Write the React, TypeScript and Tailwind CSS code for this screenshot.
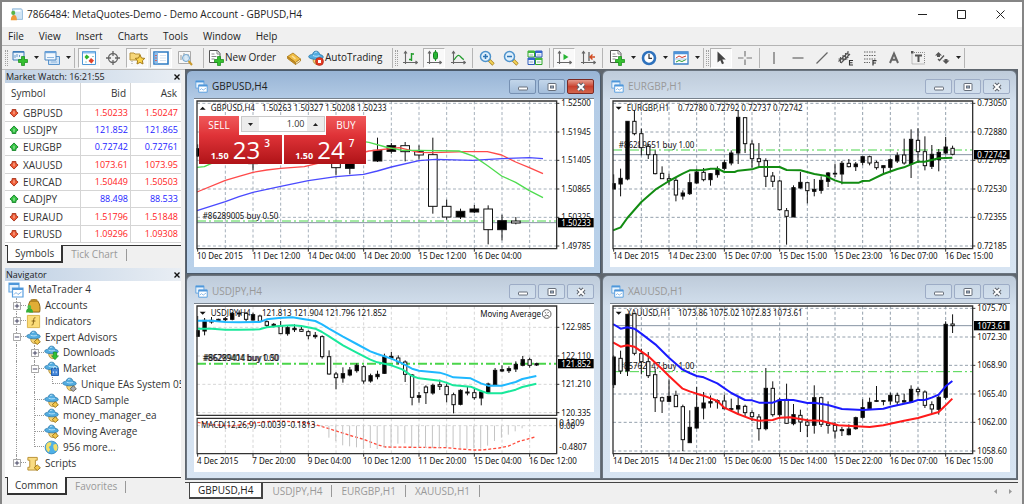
import type { ReactNode } from "react";

/* ---------- data ---------- */

const menus = ["File", "View", "Insert", "Charts", "Tools", "Window", "Help"];

const quotes = [
  { symbol: "GBPUSD", bid: "1.50233", ask: "1.50247", up: false, blue: false },
  { symbol: "USDJPY", bid: "121.852", ask: "121.865", up: true, blue: true },
  { symbol: "EURGBP", bid: "0.72742", ask: "0.72761", up: true, blue: true },
  { symbol: "XAUUSD", bid: "1073.61", ask: "1073.95", up: false, blue: false },
  { symbol: "EURCAD", bid: "1.50449", ask: "1.50503", up: false, blue: false },
  { symbol: "CADJPY", bid: "88.498", ask: "88.533", up: true, blue: true },
  { symbol: "EURAUD", bid: "1.51796", ask: "1.51848", up: false, blue: false },
  { symbol: "EURUSD", bid: "1.09296", ask: "1.09308", up: false, blue: false },
];

/* slot, body top, body bottom, wick top, wick bottom, filled */
type Candle = [number, number, number, number, number, 0 | 1];

const eurgbp: Candle[] = [
  [0, 340, 356, 312, 356, 1], [1, 324, 341, 295, 378, 1], [2, 153, 326, 153, 330, 1], [3, 153, 190, 120, 195, 0],
  [4, 190, 232, 175, 255, 0], [5, 228, 253, 220, 266, 0], [6, 253, 310, 240, 312, 0], [7, 309, 325, 288, 325, 0],
  [8, 325, 330, 310, 345, 0], [9, 330, 374, 322, 393, 0], [10, 368, 377, 360, 388, 1], [11, 337, 370, 310, 374, 1],
  [12, 305, 338, 295, 340, 1], [13, 306, 328, 293, 333, 0], [14, 310, 328, 308, 346, 1], [15, 296, 313, 288, 322, 1],
  [16, 277, 294, 268, 300, 1], [17, 248, 278, 240, 285, 1], [18, 141, 248, 120, 281, 1], [19, 142, 220, 142, 248, 0],
  [20, 221, 265, 210, 292, 0], [21, 265, 274, 218, 290, 0], [22, 271, 318, 264, 350, 0], [23, 317, 333, 305, 350, 0],
  [24, 332, 418, 328, 420, 0], [25, 421, 438, 413, 523, 0], [26, 352, 440, 345, 440, 1], [27, 336, 353, 305, 355, 1],
  [28, 337, 361, 337, 399, 0], [29, 357, 363, 326, 378, 1], [30, 330, 360, 318, 370, 1], [31, 308, 333, 305, 350, 1],
  [32, 309, 311, 280, 320, 1], [33, 279, 311, 272, 342, 1], [34, 279, 289, 266, 291, 0], [35, 281, 289, 275, 302, 1],
  [36, 259, 276, 259, 285, 1], [37, 259, 278, 256, 285, 0], [38, 276, 292, 271, 298, 0], [39, 286, 292, 286, 308, 1],
  [40, 268, 291, 264, 304, 1], [41, 256, 272, 246, 278, 1], [42, 254, 278, 205, 283, 0], [43, 207, 281, 177, 323, 1],
  [44, 210, 244, 174, 278, 0], [45, 244, 286, 198, 300, 0], [46, 252, 288, 224, 296, 1], [47, 246, 268, 236, 303, 1],
  [48, 230, 248, 200, 252, 1], [49, 234, 252, 226, 255, 0],
];

const xauusd: Candle[] = [
  [0, 245, 328, 240, 338, 1], [1, 249, 287, 226, 296, 0], [2, 117, 287, 117, 302, 1], [3, 115, 234, 115, 240, 0],
  [4, 235, 259, 220, 297, 0], [5, 259, 301, 230, 308, 0], [6, 298, 367, 280, 410, 0], [7, 367, 377, 364, 413, 0],
  [8, 363, 378, 312, 380, 1], [9, 360, 394, 346, 394, 0], [10, 394, 493, 388, 527, 0], [11, 456, 502, 405, 502, 1],
  [12, 396, 458, 335, 460, 1], [13, 383, 398, 350, 432, 1], [14, 379, 383, 360, 397, 1], [15, 376, 380, 372, 400, 1],
  [16, 377, 400, 358, 402, 0], [17, 400, 402, 370, 405, 1], [18, 391, 401, 362, 418, 1], [19, 393, 412, 388, 425, 0],
  [20, 412, 424, 405, 437, 0], [21, 425, 460, 416, 496, 0], [22, 339, 460, 278, 465, 1], [23, 339, 418, 318, 424, 0],
  [24, 374, 418, 368, 430, 1], [25, 372, 444, 325, 445, 0], [26, 418, 445, 386, 450, 1], [27, 420, 440, 403, 470, 0],
  [28, 440, 450, 430, 485, 0], [29, 367, 450, 330, 475, 1], [30, 367, 447, 364, 455, 0], [31, 445, 450, 378, 475, 0],
  [32, 450, 467, 440, 490, 0], [33, 463, 466, 455, 482, 1], [34, 461, 478, 447, 480, 1], [35, 427, 460, 424, 463, 1],
  [36, 397, 426, 372, 430, 1], [37, 381, 400, 367, 403, 1], [38, 376, 378, 332, 380, 1], [39, 376, 378, 374, 390, 1],
  [40, 360, 377, 352, 388, 1], [41, 360, 380, 352, 392, 0], [42, 376, 380, 355, 382, 1], [43, 342, 381, 330, 383, 1],
  [44, 342, 349, 336, 364, 0], [45, 350, 390, 345, 398, 0], [46, 388, 401, 378, 415, 0], [47, 366, 402, 360, 418, 1],
  [48, 147, 366, 138, 372, 1], [49, 146, 151, 117, 173, 0],
];

const usdjpy: Candle[] = [
  [0, 166, 183, 122, 183, 1], [1, 135, 167, 128, 180, 1], [2, 135, 140, 125, 145, 0], [3, 132, 138, 130, 140, 1],
  [4, 130, 133, 125, 138, 1], [5, 114, 132, 110, 135, 1], [6, 113, 116, 105, 125, 1], [7, 114, 132, 110, 138, 0],
  [8, 118, 134, 112, 136, 1], [9, 122, 138, 118, 140, 0], [10, 139, 150, 135, 155, 0], [11, 147, 153, 143, 156, 1],
  [12, 151, 175, 137, 176, 0], [13, 157, 175, 150, 181, 1], [14, 159, 163, 147, 170, 1], [15, 162, 168, 150, 170, 0],
  [16, 169, 181, 165, 192, 0], [17, 180, 184, 170, 190, 1], [18, 184, 244, 180, 250, 0], [19, 244, 296, 225, 298, 0],
  [20, 296, 307, 290, 342, 0], [21, 295, 308, 276, 322, 1], [22, 284, 299, 275, 303, 1], [23, 270, 286, 264, 292, 1],
  [24, 274, 317, 270, 325, 0], [25, 301, 317, 295, 322, 1], [26, 297, 304, 286, 312, 1], [27, 243, 294, 235, 296, 1],
  [28, 243, 248, 230, 252, 1], [29, 248, 260, 240, 268, 0], [30, 260, 297, 255, 320, 0], [31, 299, 366, 296, 390, 0],
  [32, 361, 366, 350, 382, 1], [33, 335, 352, 330, 386, 0], [34, 330, 353, 325, 358, 1], [35, 328, 333, 313, 344, 0],
  [36, 333, 358, 325, 381, 0], [37, 358, 388, 352, 414, 0], [38, 345, 387, 342, 390, 1], [39, 350, 353, 332, 360, 1],
  [40, 352, 367, 340, 373, 0], [41, 350, 368, 345, 390, 1], [42, 326, 353, 322, 356, 1], [43, 285, 328, 278, 330, 1],
  [44, 283, 287, 270, 290, 1], [45, 280, 286, 273, 293, 1], [46, 267, 281, 258, 290, 1], [47, 253, 270, 242, 273, 1],
  [48, 253, 270, 247, 277, 0], [49, 265, 269, 262, 272, 1],
];

const gbpusd: Candle[] = [
  [0, 235, 257, 222, 260, 1], [4, 275, 280, 260, 300, 1], [10, 275, 292, 275, 315, 0], [11, 275, 294, 270, 312, 1],
  [13, 240, 272, 202, 275, 1], [14, 226, 243, 218, 250, 1], [15, 226, 244, 215, 273, 0], [16, 244, 254, 225, 268, 0],
  [17, 253, 408, 202, 430, 0], [18, 408, 440, 388, 448, 0], [19, 423, 440, 415, 446, 1], [20, 416, 425, 404, 428, 1],
  [21, 416, 478, 405, 522, 0], [22, 451, 478, 433, 510, 1], [23, 452, 458, 440, 462, 0],
];

const macdBars = [
  455, 487, 497, 510, 513, 516, 521, 518, 521, 517, 514, 505, 504, 517, 516, 518, 518, 517, 516, 517, 519, 520, 519, 520,
  511, 497, 487, 478, 468, 459,
];

/* ---------- chart drawing ---------- */

type ChartProps = {
  name: string;
  x: number;
  header: string;
  values: string;
  open?: boolean;
  candles: Candle[];
  pitch: number;
  lines: { points: string; color: string; width: number; dash?: string }[];
  gridY: number[];
  gridColor: string;
  prices: string[];
  times: string[];
  last: { y: number; text: string };
  order: { y: number; text: string; textX: number; textY: number; width: number };
  priceLine?: boolean;
  bottom: number;
  bodyWidth: number;
  extra?: ReactNode;
};

function Chart(p: ChartProps) {
  const left = p.x + 9;
  const right = left + 1079;
  const first = left + 2;
  const columns = Array.from({ length: 12 }, (_, i) => first + 83 * (i + 1));
  return (
    <svg
      viewBox={`${p.x} 86 1200 504`}
      className="block h-auto w-full bg-white font-['Noto_Sans',sans-serif] text-[24px]"
      role="img"
      aria-label={p.name}
    >
      <g stroke={p.gridColor} strokeWidth="3" strokeDasharray="9 7" fill="none">
        {columns.map((x) => (
          <path key={x} d={`M${x} 93V533`} />
        ))}
        {p.gridY.map((y) => (
          <path key={y} d={`M${left} ${y}H${right}`} />
        ))}
      </g>
      {p.priceLine !== false && <path d={`M${left} ${p.last.y}H${right}`} stroke="#8794a3" strokeWidth="3" />}
      <path
        d={`M${left} ${p.order.y}H${right}`}
        stroke="#4ad54a"
        strokeWidth={p.order.width}
        strokeDasharray="27 9 6 9"
      />
      <path
        d={p.open ? `M${left + 8} 118h18l-9-9z` : `M${left + 8} 109h18l-9 9z`}
        fill="#111"
      />
      <text x={left + 41} y="121" fill="#111">{p.header}</text>
      <text x={left + 195} y="121" fill="#111">{p.values}</text>
      <text x={p.order.textX} y={p.order.textY} fill="#111">{p.order.text}</text>
      {p.candles.map(([slot, top, base, high, low, filled]) => {
        const cx = first + slot * p.pitch;
        return (
          <g key={slot} stroke="#111" strokeWidth="3">
            <path d={`M${cx} ${high}V${low}`} />
            <rect
              x={cx - p.bodyWidth / 2}
              y={top}
              width={p.bodyWidth}
              height={base - top}
              fill={filled ? "#000" : "#fff"}
            />
          </g>
        );
      })}
      {p.lines.map((l) => (
        <polyline
          key={l.color}
          points={l.points}
          fill="none"
          stroke={l.color}
          strokeWidth={l.width}
          strokeDasharray={l.dash}
          strokeLinejoin="round"
        />
      ))}
      {p.extra}
      <path d={`M${p.x} 86H${left - 2}V590H${p.x}z`} fill="#fff" />
      <path d={`M${left} 92H${right}V${p.bottom}H${left}z`} fill="none" stroke="#333" strokeWidth="4" />
      {p.prices.map((t, i) => (
        <g key={t}>
          <path d={`M${right} ${p.gridY[i]}h8`} stroke="#333" strokeWidth="3" />
          <text x={right + 14} y={p.gridY[i] + 9} fill="#111">{t}</text>
        </g>
      ))}
      <rect x={right + 4} y={p.last.y - 14} width="107" height="28" fill="#000" />
      <text x={right + 14} y={p.last.y + 9} fill="#fff">{p.last.text}</text>
      {p.times.map((t, i) => (
        <g key={t}>
          <path d={`M${first + 166 * i} 535v9`} stroke="#333" strokeWidth="3" />
          <text x={first + 166 * i - 2} y="567" fill="#111">{t}</text>
        </g>
      ))}
    </svg>
  );
}

/* ---------- icons ---------- */

function Icon({ children, className = "size-4" }: { children: ReactNode; className?: string }) {
  return (
    <svg viewBox="0 0 16 16" className={`${className} shrink-0`} fill="none" aria-hidden="true">
      {children}
    </svg>
  );
}

const Plus = () => (
  <path d="M9.5 6.5h3v3h3v3h-3v3h-3v-3h-3v-3h3z" fill="#35c02f" stroke="#138a14" strokeWidth=".7" />
);

const NewChartIcon = () => (
  <Icon>
    <path d="M1 1.5h11v8.500H1z" fill="#eaf3fc" stroke="#3f7cb8" />
    <path d="M1 2h11" stroke="#3f7cb8" strokeWidth="1.500" />
    <path d="M3 8V5m2 2V4m2.500 3V5" stroke="#6a9ccc" />
    <Plus />
  </Icon>
);

const ProfilesIcon = () => (
  <Icon>
    <path d="M4.500 6.500h11v8h-11z" fill="#cfe2f5" stroke="#5a94cc" />
    <path d="M1 1.500h11v8.500H1z" fill="#f2f8fe" stroke="#4a86c2" />
    <path d="M1 2.200h11" stroke="#6ba3da" strokeWidth="2" />
    <path d="M3 7.500h7M7 12h6" stroke="#8fb7de" />
  </Icon>
);

const MarketWatchIcon = () => (
  <Icon>
    <path d="M1.500 1.500h13v13h-13z" fill="#fff" stroke="#4d97d6" />
    <path d="M2 2.500h12" stroke="#86bdec" strokeWidth="2" />
    <path d="M5.500 4.500l3 2.500-3 2.500-2-2.500z" fill="#2fb52b" />
    <path d="M10 8l3 2.500-2.500 3-3-2.500z" fill="#e0442a" />
    <path d="M11 6.500h2M4 12h2" stroke="#9cc" />
  </Icon>
);

const TargetIcon = () => (
  <Icon>
    <circle cx="8" cy="8" r="4.500" stroke="#666" strokeWidth="1.300" />
    <path d="M8 1v5M8 10v5M1 8h5M10 8h5" stroke="#666" strokeWidth="1.300" />
  </Icon>
);

const NavigatorIcon = () => (
  <Icon>
    <path d="M1 3h4l1 1h5v6H1z" fill="#f6d679" stroke="#b8933a" />
    <path d="M3 11v3" stroke="#999" strokeDasharray="1 1" />
    <path d="M11 5l1.500 3 3.300.4-2.400 2.300.6 3.300-3-1.600-3 1.600.6-3.300-2.400-2.300 3.300-.4z" fill="#fbd44a" stroke="#a67c1d" />
  </Icon>
);

const TerminalIcon = () => (
  <Icon>
    <path d="M1 2h14v12H1z" fill="#fff" stroke="#2f7cc4" strokeWidth="1.600" />
    <path d="M1.500 2.500h3.500v11H1.500z" fill="#8dbdea" />
    <path d="M3 5v1m0 1.500v1M3 10v1" stroke="#e4452f" strokeWidth="1.400" />
    <path d="M7 5.500h6M7 8h6M7 10.500h6" stroke="#d7e4f2" />
  </Icon>
);

const TesterIcon = () => (
  <Icon>
    <path d="M1.500 1.500h12v12h-12z" fill="#f8f8f8" stroke="#aaa" />
    <path d="M4 10V5m3 6V3m4 5V4" stroke="#999" />
    <circle cx="9" cy="8" r="3.500" fill="#cfe6f7cc" stroke="#6fa5cf" />
    <path d="M11.500 11l3.500 4" stroke="#c99a2e" strokeWidth="2" />
  </Icon>
);

const OrderIcon = () => (
  <Icon>
    <path d="M1.500.5h8l2.500 3v9H1.500z" fill="#fff" stroke="#555" />
    <path d="M9 1v3h3M3.500 4h3M3.500 6.500h5M3.500 9h3" stroke="#888" />
    <Plus />
  </Icon>
);

const BookIcon = () => (
  <Icon>
    <path d="M1.500 6.500L7 3l7.500 6-5 3.500z" fill="#f0bd45" stroke="#a87716" strokeWidth=".8" />
    <path d="M1.500 6.500v2L9.500 14.500v-2z" fill="#c98f22" stroke="#a87716" strokeWidth=".8" />
    <path d="M9.500 12.500l5-3.500v2l-5 3.500z" fill="#fff3d0" stroke="#a87716" strokeWidth=".8" />
    <path d="M6 6l3.500 2.800" stroke="#fbe09a" strokeWidth="1.500" />
  </Icon>
);

const hat = (
  <>
    <path d="M5 9.500c0 3 2 5 4.500 5s4-2 4-4.500l-4-3z" fill="#f5d377" stroke="#a8842f" strokeWidth=".8" />
    <path d="M.700 6.500C1 4.800 3.500 4.600 4.600 4.400 5 2.200 6.500 1 8.500 1.200c2 .2 3 1.700 3.200 3.400 1.800.3 3.500 1 3.500 2.300 0 1.800-3.200 2.600-7 2.500C4 9.300.600 8.300.700 6.500z" fill="#52ace0" stroke="#2876a8" strokeWidth=".8" />
    <path d="M5 5.500c2 1 4.500 1 6.500.2M6.500 3c.6-.6 1.500-.8 2.300-.7" stroke="#bfe5fb" />
  </>
);

const AutoIcon = () => (
  <Icon>
    {hat}
    <circle cx="11.500" cy="11.500" r="4" fill="#e23a22" stroke="#a8200e" strokeWidth=".6" />
    <path d="M10 10h3v3h-3z" fill="#fff" />
  </Icon>
);

const axes = <path d="M3.500 2v12M1 12.500h14M2 3.500L3.500 1.500 5 3.500M13.500 11l1.800 1.500-1.800 1.500" stroke="#666" strokeWidth="1.100" />;

const BarsIcon = () => (
  <Icon>
    {axes}
    <path d="M9.500 3v8M9.500 4H12M7 9.500h2.500" stroke="#1f9b2a" strokeWidth="1.400" />
  </Icon>
);
const CandlesIcon = () => (
  <Icon>
    {axes}
    <path d="M9.500 0v11" stroke="#1f9b2a" />
    <rect x="7.500" y="2" width="4" height="7" rx="1.500" fill="#27b534" stroke="#14801f" />
  </Icon>
);
const LineIcon = () => (
  <Icon>
    {axes}
    <path d="M4 10C6 7 7.500 5 9 5.500S12 9 14 9.500" stroke="#1f9b2a" strokeWidth="1.200" />
  </Icon>
);
const Magnifier = ({ plus }: { plus?: boolean }) => (
  <Icon>
    <path d="M10 10l4.500 4.500" stroke="#a98222" strokeWidth="3.200" />
    <path d="M10.500 10.500l3.700 3.700" stroke="#f5d558" strokeWidth="1.800" />
    <circle cx="6.500" cy="6.500" r="5" fill="#dff0fc" stroke="#4e93cc" strokeWidth="1.500" />
    <path d={plus ? "M4 6.500h5M6.500 4v5" : "M4 6.500h5"} stroke="#2d74b5" strokeWidth="1.500" />
  </Icon>
);
const TileIcon = () => (
  <Icon>
    <path d="M1 1h6.500v6H1zM8.500 8h6.500v6.500H8.500z" fill="#f4fff2" stroke="#2fa52c" />
    <path d="M8.500 1h6.500v6H8.500zM1 8h6.500v6.500H1z" fill="#eef4ff" stroke="#2f5bb8" />
    <path d="M1 2h6.500M8.500 9h6.500" stroke="#42b93e" strokeWidth="2" />
    <path d="M8.500 2h6.500M1 9h6.500" stroke="#3466cc" strokeWidth="2" />
    <path d="M2.500 5h3.500M10 5h3.500M2.500 12h3.500M10 12h3.500" stroke="#9ab" />
  </Icon>
);
const ScrollIcon = () => (
  <Icon>
    {axes}
    <path d="M7.500 4v6l5-3z" fill="#27b534" />
  </Icon>
);
const ShiftIcon = () => (
  <Icon>
    {axes}
    <path d="M9 2v9" stroke="#555" strokeWidth="1.200" />
    <path d="M15 7h-5M12.500 4.500L10 7l2.500 2.500" stroke="#d14a20" strokeWidth="1.400" />
  </Icon>
);
const ClockIcon = () => (
  <Icon>
    <circle cx="8" cy="8" r="6" fill="#fff" stroke="#2e72bd" strokeWidth="2.600" />
    <path d="M8 4v4.300h3" stroke="#333" strokeWidth="1.200" />
  </Icon>
);
const TemplateIcon = () => (
  <Icon>
    <path d="M1 2h14v12H1z" fill="#fff" stroke="#3a80c6" strokeWidth="1.300" />
    <path d="M1 3h14" stroke="#4d93d9" strokeWidth="2.500" />
    <path d="M3 8l3-2 3 1.500L13 6" stroke="#d23b2b" />
    <path d="M3 12l3-1.500 3 1 4-2" stroke="#2a9c35" />
    <path d="M2 9h12" stroke="#8db8e2" strokeWidth=".8" />
  </Icon>
);
const CursorIcon = () => (
  <Icon>
    <path d="M4.500 1.500v11l2.800-2.300 1.700 4 2-1-1.700-3.700h3.500z" fill="#444" />
  </Icon>
);
const CrossIcon = () => (
  <Icon>
    <path d="M8 1v5.500M8 9.500V15M1 8h5.500M9.500 8H15" stroke="#777" strokeWidth="1.200" />
  </Icon>
);
const Stroke = ({ d }: { d: string }) => (
  <Icon>
    <path d={d} stroke="#666" strokeWidth="1.200" />
  </Icon>
);
const ChannelIcon = () => (
  <Icon>
    <path d="M.5 11.500L10.500 2M3 13l9-9M2.500 7v6M5 5v7M7.500 3v7M10 1v7M.5 9h9" stroke="#555" strokeWidth="1.100" />
    <path d="M15 10.500h-3.500v4.500H15M11.500 12.800h3" stroke="#333" strokeWidth="1.100" />
  </Icon>
);
const FiboIcon = () => (
  <Icon>
    <path d="M2 2h12M2 5.500h12M2 9h12M2 12.500h6" stroke="#666" strokeDasharray="1.500 1" strokeWidth="1.200" />
    <path d="M11 15.500v-4.800h3.500M11 13h3" stroke="#333" strokeWidth="1.200" />
  </Icon>
);
const LetterAIcon = () => (
  <Icon>
    <path d="M4 13L8 3.500 12 13M5.500 9.700h5" stroke="#666" strokeWidth="2" />
  </Icon>
);
const LabelIcon = () => (
  <Icon>
    <path d="M2 2.500h12.500V14H2z" stroke="#888" strokeDasharray="1 1" />
    <path d="M1 1h2.500v2.500H1z" fill="#555" />
    <path d="M5 5.500h7M8.500 5.500V12" stroke="#555" strokeWidth="2" />
  </Icon>
);
const ArrowsIcon = () => (
  <Icon>
    <path d="M4.500 2L8 5.500H6V7H3V5.500H1z" fill="#555" />
    <path d="M4 9l1.500 1.500L10 5.500" stroke="#555" strokeWidth="1.300" />
    <path d="M12 14L8.500 10.500h2V9h3v1.500h2z" fill="#555" />
  </Icon>
);

const AppIcon = () => (
  <Icon className="size-[13px]">
    <path d="M3 1h11l1.500 2v11H5z" fill="#cfe4f5" stroke="#86b1d6" />
    <path d="M6 3.500h7" stroke="#fff" strokeWidth="2" />
    <circle cx="4" cy="6" r="2.500" fill="#58b548" />
    <path d="M1 15c0-4 1.500-6.500 4-6.500S8.500 11 8.500 15z" fill="#ef9a3a" />
  </Icon>
);

const ChartsIcon = ({ className = "size-[13px]" }: { className?: string }) => (
  <Icon className={className}>
    <path d="M1 1h10v9H1z" fill="#e8f3fd" stroke="#68a7e0" strokeWidth="1.200" />
    <path d="M1 2h10" stroke="#4f97da" strokeWidth="2" />
    <path d="M4.500 6h10.500v9H4.500z" fill="#fff" stroke="#5a9fdf" strokeWidth="1.200" />
    <path d="M4.500 7h10.500" stroke="#4f97da" strokeWidth="2" />
    <path d="M6 12.500l2-2 2 2 3.500-2.500" stroke="#79b0e6" />
  </Icon>
);

const Quote = ({ up }: { up: boolean }) => (
  <Icon className="size-[10px]">
    <path
      d="M8 1.500l6.500 6.500-2 2H11v3.500H5V10H3.500l-2-2z"
      transform={up ? undefined : "rotate(180 8 8)"}
      fill={up ? "#35c243" : "#ee5a35"}
      stroke={up ? "#16852a" : "#a8321a"}
      strokeWidth="1.500"
    />
    <path d={up ? "M8 6v5" : "M8 5v5"} stroke={up ? "#b6f0bd" : "#fbc7b4"} strokeWidth="1.500" />
  </Icon>
);

const tree15 = "size-[15px]";

const AccountsIcon = () => (
  <Icon className={tree15}>
    <path d="M4 4c2-3 7-3 9 0 2 2.500 2.500 8 1.500 11h-11C2 12 2.500 6 4 4z" fill="#e0ad35" stroke="#85600f" />
    <path d="M4 3.500h9M5 2h7" stroke="#a67a1b" />
    <circle cx="3.500" cy="9.500" r="2" fill="#4bc04a" />
    <path d="M0 15.500c0-3 1.500-4.500 3.500-4.500s4 1.500 4 4.500z" fill="#34ae37" />
  </Icon>
);
const IndicatorsIcon = () => (
  <Icon className={tree15}>
    <path d="M1.500 1.500h13v13h-13z" fill="#fbdc77" stroke="#d9b24a" />
    <path d="M10 4C8.500 3.500 8.300 5 8 8S7.500 12 6 11.800M6 7.500h4" stroke="#7b5a12" />
  </Icon>
);
const ExpertIcon = ({ badge }: { badge: string }) => (
  <Icon className={tree15}>
    {hat}
    {badge === "gold" && <path d="M12 9.500l3.300 3-3.300 3-3.300-3z" fill="#f3c84c" stroke="#9b751d" />}
    {badge === "gray" && <path d="M12 9.500l3.300 3-3.300 3-3.300-3z" fill="#aaa" stroke="#666" />}
    {badge === "green" && <path d="M10 7.500h3.500v4h2L11.700 15.700 8 11.500h2z" fill="#2fc136" stroke="#12801a" strokeWidth=".6" />}
    {badge === "blue" && (
      <>
        <path d="M8 8h7.500v7.500H8z" fill="#4386d8" stroke="#1f5cab" />
        <path d="M10 8c0-3 3.500-3 3.500 0M10 11v2M13 11v2" stroke="#dcecff" />
      </>
    )}
  </Icon>
);
const GlobeIcon = () => (
  <Icon className={tree15}>
    <circle cx="8" cy="8" r="6.800" fill="#4fb0e6" stroke="#2a7fb5" strokeWidth=".8" />
    <path d="M3 4c2-2 4-2 5-1L7 6 5 7.500 6.500 10 5 13C2 11 1.500 7 3 4zM10 5l3-1c2 2.500 2 6 0 8l-2-1-1-3z" fill="#f3df66" />
  </Icon>
);
const ScriptsIcon = () => (
  <Icon className={tree15}>
    <path d="M2 1.500h10v3h-2v8h2v2.500H2v-3h2v-7.500H2z" fill="#f9dc83" stroke="#b88e30" />
    <path d="M12 9.500l3.300 3-3.300 3-3.300-3z" fill="#f3c84c" stroke="#9b751d" />
  </Icon>
);

/* ---------- toolbar ---------- */

function Tool({ label, pressed, children }: { label: string; pressed?: boolean; children: ReactNode }) {
  return (
    <button type="button" aria-label={label} title={label} aria-pressed={pressed} className="flex h-full w-6 shrink-0 items-center justify-center">
      <span
        className={
          pressed
            ? "flex h-5 w-[22px] items-center justify-center border border-[#b4b4b4] border-r-white border-b-white bg-[#f9f9f9]"
            : "flex h-5 w-[22px] items-center justify-center"
        }
      >
        {children}
      </span>
    </button>
  );
}

function DropTool({ label, children }: { label: string; children: ReactNode }) {
  return (
    <button type="button" aria-label={label} title={label} className="flex h-full w-8 shrink-0 items-center gap-1.5 pl-1">
      {children}
      <svg viewBox="0 0 5 3" className="h-[3px] w-[5px] shrink-0" aria-hidden="true">
        <path d="M0 0h5L2.500 3z" fill="#222" />
      </svg>
    </button>
  );
}

const Sep = () => <span className="mx-0.5 h-5 w-px shrink-0 bg-[#b5b5b5]" />;
const Grip = () => <span className="h-4 w-[3px] shrink-0 border-x border-dotted border-[#a0a0a0]" />;

function Toolbar() {
  return (
    <div role="toolbar" className="flex h-6 items-center overflow-hidden border-t border-[#b4b4b4] bg-[#f0f0f0] pl-[3px]">
      <Grip />
      <DropTool label="New chart"><NewChartIcon /></DropTool>
      <DropTool label="Profiles"><ProfilesIcon /></DropTool>
      <Sep />
      <Tool label="Market Watch" pressed><MarketWatchIcon /></Tool>
      <Tool label="Data Window"><TargetIcon /></Tool>
      <Tool label="Navigator" pressed><NavigatorIcon /></Tool>
      <Tool label="Terminal" pressed><TerminalIcon /></Tool>
      <Tool label="Strategy Tester"><TesterIcon /></Tool>
      <span className="w-1 shrink-0" />
      <Sep />
      <button type="button" className="flex h-full w-[76px] shrink-0 items-center gap-px pl-0.5 text-[10px] whitespace-nowrap">
        <OrderIcon />
        New Order
      </button>
      <Tool label="MetaEditor"><BookIcon /></Tool>
      <button type="button" className="flex h-full w-[84px] shrink-0 items-center gap-px pl-0.5 text-[10px] whitespace-nowrap">
        <AutoIcon />
        AutoTrading
      </button>
      <Sep />
      <Grip />
      <Tool label="Bar chart"><BarsIcon /></Tool>
      <Tool label="Candlesticks" pressed><CandlesIcon /></Tool>
      <Tool label="Line chart"><LineIcon /></Tool>
      <Sep />
      <Tool label="Zoom in"><Magnifier plus /></Tool>
      <Tool label="Zoom out"><Magnifier /></Tool>
      <Tool label="Tile windows"><TileIcon /></Tool>
      <Sep />
      <Tool label="Auto scroll" pressed><ScrollIcon /></Tool>
      <Tool label="Chart shift"><ShiftIcon /></Tool>
      <Sep />
      <DropTool label="Indicators"><OrderIcon /></DropTool>
      <DropTool label="Periods"><ClockIcon /></DropTool>
      <DropTool label="Templates"><TemplateIcon /></DropTool>
      <Sep />
      <Grip />
      <Tool label="Cursor" pressed><CursorIcon /></Tool>
      <Tool label="Crosshair"><CrossIcon /></Tool>
      <Sep />
      <Tool label="Vertical line"><Stroke d="M8 2v12" /></Tool>
      <Tool label="Horizontal line"><Stroke d="M2.500 8h11" /></Tool>
      <Tool label="Trendline"><Stroke d="M2.500 13.500l11-11" /></Tool>
      <Tool label="Equidistant channel"><ChannelIcon /></Tool>
      <Tool label="Fibonacci retracement"><FiboIcon /></Tool>
      <Tool label="Text"><LetterAIcon /></Tool>
      <Tool label="Text label"><LabelIcon /></Tool>
      <DropTool label="Arrows"><ArrowsIcon /></DropTool>
      <Sep />
    </div>
  );
}

/* ---------- side panels ---------- */

function PanelHeader({ title }: { title: string }) {
  return (
    <div className="flex h-[13px] shrink-0 items-center justify-between bg-linear-to-r from-[#c0d1e4] to-[#e9eef4] pl-px text-[9px] text-[#222]">
      <h2>{title}</h2>
      <button type="button" aria-label={`Close ${title}`} className="flex size-2 items-center justify-center">
        <svg viewBox="0 0 6 6" className="size-[6px]" aria-hidden="true">
          <path d="M.5.5l5 5M5.500.5l-5 5" stroke="#111" strokeWidth="1.400" />
        </svg>
      </button>
    </div>
  );
}

function PanelTabs({ active, other }: { active: string; other: string }) {
  return (
    <div role="tablist" className="flex h-[18px] shrink-0 items-stretch text-[10px]">
      <span className="w-0.5 border-t border-[#333]" />
      <button type="button" role="tab" aria-selected="true" className="border border-t-0 border-r-2 border-b-2 border-[#333] bg-white px-[7px] text-[#333]">
        {active}
      </button>
      <div className="flex flex-1 items-center border-t border-[#333]">
        <button type="button" role="tab" aria-selected="false" className="pr-2 pl-2 text-[#999]">
          {other}
        </button>
        <span className="h-3 w-px bg-[#999]" />
      </div>
    </div>
  );
}

function MarketWatch() {
  return (
    <section className="flex flex-col">
      <PanelHeader title="Market Watch: 16:21:55" />
      <table className="h-[160px] w-full table-fixed border-collapse bg-white text-[#333]">
        <thead>
          <tr className="h-[21px] text-[10px]">
            <th className="w-[75px] border border-t-0 border-l-0 border-[#d5d5d5] pl-1.5 text-left font-normal">Symbol</th>
            <th className="border border-t-0 border-[#d5d5d5] pr-1 text-right font-normal">Bid</th>
            <th className="border-b border-[#d5d5d5] pr-1 text-right font-normal">Ask</th>
          </tr>
        </thead>
        <tbody>
          {quotes.map((q) => (
            <tr key={q.symbol} className={q.blue ? "text-[9px] text-[#2222ff]" : "text-[9px] text-[#ff2222]"}>
              <td className="border border-l-0 border-[#d5d5d5] p-0 pl-1">
                <span className="flex items-center gap-1 text-[10px] leading-3 text-[#333]">
                  <Quote up={q.up} />
                  {q.symbol}
                </span>
              </td>
              <td className="border border-[#d5d5d5] p-0 pr-0.5 text-right leading-3">{q.bid}</td>
              <td className="border-b border-[#d5d5d5] p-0 pr-[3px] text-right leading-3">{q.ask}</td>
            </tr>
          ))}
        </tbody>
      </table>
      <div className="h-0.5 bg-white" />
      <PanelTabs active="Symbols" other="Tick Chart" />
    </section>
  );
}

type CellKind = "tee" | "end" | "pipe";
type TreeRow = { label: string; cells: CellKind[]; box?: "+" | "-"; icon: ReactNode };

const tree: TreeRow[] = [
  { label: "MetaTrader 4", cells: [], icon: <ChartsIcon className="size-4" /> },
  { label: "Accounts", cells: ["tee"], box: "+", icon: <AccountsIcon /> },
  { label: "Indicators", cells: ["tee"], box: "+", icon: <IndicatorsIcon /> },
  { label: "Expert Advisors", cells: ["tee"], box: "-", icon: <ExpertIcon badge="gold" /> },
  { label: "Downloads", cells: ["pipe", "tee"], box: "+", icon: <ExpertIcon badge="green" /> },
  { label: "Market", cells: ["pipe", "tee"], box: "-", icon: <ExpertIcon badge="blue" /> },
  { label: "Unique EAs System 05", cells: ["pipe", "pipe", "end"], icon: <ExpertIcon badge="gray" /> },
  { label: "MACD Sample", cells: ["pipe", "tee"], icon: <ExpertIcon badge="gold" /> },
  { label: "money_manager_ea", cells: ["pipe", "tee"], icon: <ExpertIcon badge="gold" /> },
  { label: "Moving Average", cells: ["pipe", "tee"], icon: <ExpertIcon badge="gold" /> },
  { label: "956 more...", cells: ["pipe", "end"], icon: <GlobeIcon /> },
  { label: "Scripts", cells: ["end"], box: "+", icon: <ScriptsIcon /> },
];

function Cell({ kind, box }: { kind: CellKind; box?: "+" | "-" }) {
  return (
    <span className="relative flex w-[18px] shrink-0 self-stretch">
      <span
        className={
          kind === "end"
            ? "h-1/2 w-[9px] border-r border-dotted border-[#999]"
            : "h-full w-[9px] border-r border-dotted border-[#999]"
        }
      />
      {kind !== "pipe" && <span className="h-1/2 w-[9px] border-b border-dotted border-[#999]" />}
      {box && (
        <svg viewBox="0 0 9 9" className="absolute top-1/2 left-1/2 size-2 -translate-x-1/2 -translate-y-1/2" aria-hidden="true">
          <path d="M.5.5h8v8h-8z" fill="#fff" stroke="#999" />
          <path d={box === "+" ? "M2 4.500h5M4.500 2v5" : "M2 4.500h5"} stroke="#335" />
        </svg>
      )}
    </span>
  );
}

function Navigator() {
  return (
    <section className="flex flex-1 flex-col">
      <PanelHeader title="Navigator" />
      <ul role="tree" className="flex flex-1 flex-col overflow-hidden bg-white pt-px pb-1.5 pl-[3px] text-[10px] text-[#333]">
        {tree.map((row) => (
          <li key={row.label} role="treeitem" className="flex min-h-[15px] flex-1 items-center gap-1 leading-[15px] whitespace-nowrap">
            <span className="flex items-center self-stretch">
              {row.cells.map((kind, i) => (
                <Cell key={i} kind={kind} box={i === row.cells.length - 1 ? row.box : undefined} />
              ))}
              {row.icon}
            </span>
            {row.label}
          </li>
        ))}
      </ul>
      <PanelTabs active="Common" other="Favorites" />
    </section>
  );
}

/* ---------- chart windows ---------- */

function WindowButton({ label, kind, active }: { label: string; kind: "min" | "max" | "close"; active?: boolean }) {
  const red = active && kind === "close";
  return (
    <button
      type="button"
      aria-label={label}
      className={
        red
          ? "flex h-[15px] w-[27px] items-center justify-center rounded-xs border border-[#7c2a24] bg-linear-to-b from-[#e39a8c] via-[#c8402e] to-[#d2654c]"
          : active
            ? "flex h-[15px] w-[27px] items-center justify-center rounded-xs border border-[#7690b2] bg-linear-to-b from-[#c3d6ea] to-[#a3bdda]"
            : "flex h-[15px] w-[27px] items-center justify-center rounded-xs border border-[#9dacc6] bg-linear-to-b from-[#cbd9e7] to-[#d2dfed]"
      }
    >
      <svg viewBox="0 0 12 10" className="h-[10px] w-3" fill="none" aria-hidden="true">
        {kind === "min" && <rect x="1.500" y="5" width="9" height="3" rx=".5" fill="#fff" stroke="#666e7a" />}
        {kind === "max" && (
          <>
            <rect x="2" y="1.500" width="8" height="7" rx=".5" fill="#fff" stroke="#666e7a" />
            <rect x="4.500" y="4" width="3" height="2" fill="#9fb4cf" stroke="#666e7a" />
          </>
        )}
        {kind === "close" && (
          <>
            <path d="M3 2l6 6M9 2L3 8" stroke="#5b616b" strokeWidth="4" />
            <path d="M3 2l6 6M9 2L3 8" stroke="#fff" strokeWidth="2" />
          </>
        )}
      </svg>
    </button>
  );
}

function ChartWindow({ title, active, children }: { title: string; active?: boolean; children: ReactNode }) {
  return (
    <section
      className={
        active
          ? "rounded-t-md border border-[#4b5a6b] bg-[#b9d1ea] bg-linear-to-b from-[#98b4d5] via-[#b4cce6] via-15% to-[#b9d1ea] pr-1.5 pb-1.5 pl-[7px]"
          : "rounded-t-md border border-[#6a747f] bg-linear-to-b from-[#becbda] via-[#d2dfed] via-15% to-[#d7e4f2] pr-1.5 pb-1.5 pl-[7px]"
      }
    >
      <header className="flex h-[27px] items-center justify-between pt-1">
        <span className="flex items-center gap-1 pl-px">
          <ChartsIcon />
          <h2 className={active ? "text-[10px] text-[#222]" : "text-[10px] text-[#999]"}>{title}</h2>
        </span>
        <span className="flex gap-0.5">
          <WindowButton label="Minimize" kind="min" active={active} />
          <WindowButton label="Restore" kind="max" active={active} />
          <WindowButton label="Close" kind="close" active={active} />
        </span>
      </header>
      <div className="relative border-t border-[#77818c]">{children}</div>
    </section>
  );
}

function PriceButton({ side, small, big, pip }: { side: string; small: string; big: string; pip: string }) {
  return (
    <button
      type="button"
      aria-label={`${side} at market`}
      className="flex flex-1 items-end justify-center gap-1 bg-linear-to-b from-[#e03338] to-[#b01217] pb-1 leading-none text-white"
    >
      <span className="text-[9px] font-bold">{small}</span>
      <span className="text-[24px] leading-5">{big}</span>
      <span className="self-start pt-[3px] text-[10px] font-semibold">{pip}</span>
    </button>
  );
}

function OneClickPanel() {
  return (
    <div className="absolute top-[17px] left-[5px] flex h-12 w-[167px] flex-col bg-white">
      <div className="flex h-[19px] justify-between">
        <button type="button" className="w-10 bg-linear-to-b from-[#f0585a] to-[#e03338] text-[10px] text-white">SELL</button>
        <div className="flex h-4 w-[84px] border border-[#c9c9c9] bg-[#ececec]">
          <button type="button" aria-label="Decrease volume" className="flex w-[17px] items-center justify-center">
            <svg viewBox="0 0 5 3" className="h-[3px] w-[5px]" aria-hidden="true"><path d="M0 0h5L2.500 3z" fill="#222" /></svg>
          </button>
          <input
            aria-label="Volume"
            defaultValue="1.00"
            className="w-0 flex-1 bg-white pr-0.5 text-right text-[9px] text-[#333] outline-none"
          />
          <button type="button" aria-label="Increase volume" className="flex w-[17px] items-center justify-center">
            <svg viewBox="0 0 5 3" className="h-[3px] w-[5px]" aria-hidden="true"><path d="M0 3h5L2.500 0z" fill="#222" /></svg>
          </button>
        </div>
        <button type="button" className="w-10 bg-linear-to-b from-[#f0585a] to-[#e03338] text-[10px] text-white">BUY</button>
      </div>
      <div className="flex flex-1 gap-0.5">
        <PriceButton side="Sell" small="1.50" big="23" pip="3" />
        <PriceButton side="Buy" small="1.50" big="24" pip="7" />
      </div>
    </div>
  );
}

const gridFull = [99, 185, 270, 356, 441, 527];

function Workspace() {
  return (
    <div className="grid grid-cols-2 gap-px bg-[#5f666e] p-px">
      <ChartWindow title="GBPUSD,H4" active>
        <Chart
          name="GBPUSD H4 chart"
          x={25}
          open
          header="GBPUSD,H4"
          values="1.50263 1.50327 1.50208 1.50233"
          candles={gbpusd}
          pitch={41.5}
          bodyWidth={26}
          gridY={gridFull}
          gridColor="#a5b0bb"
          prices={["1.52500", "1.51945", "1.51405", "1.50865", "1.50325", "1.49785"]}
          times={["10 Dec 2015", "11 Dec 12:00", "14 Dec 04:00", "14 Dec 20:00", "15 Dec 12:00", "16 Dec 04:00"]}
          last={{ y: 457, text: "1.50233" }}
          order={{ y: 452, text: "#86289005 buy 0.50", textX: 51, textY: 445, width: 3 }}
          bottom={535}
          lines={[
            { color: "#ff4a4a", width: 4, points: "34,365 119,330 160,318 202,306 243,299 285,294 356,289 550,242 640,232 700,246 740,247 840,244 905,244 948,254 990,275 1031,292 1072,310" },
            { color: "#4a4aff", width: 4, points: "34,421 119,394 160,379 202,366 285,348 368,331 451,319 534,312 575,302 617,290 700,271 750,267 860,270 948,265 1031,262 1072,265" },
            { color: "#4fdc4f", width: 4, points: "34,291 56,289 300,180 550,216 600,230 650,240 700,240 820,242 865,258 907,287 948,317 990,336 1031,361 1072,382" },
          ]}
        />
        <OneClickPanel />
      </ChartWindow>
      <ChartWindow title="EURGBP,H1">
        <Chart
          name="EURGBP H1 chart"
          x={30}
          header="EURGBP,H1"
          values="0.72780 0.72792 0.72737 0.72742"
          candles={eurgbp}
          pitch={20.75}
          bodyWidth={10}
          gridY={gridFull}
          gridColor="#94a0ac"
          prices={["0.73050", "0.72880", "0.72705", "0.72530", "0.72355", "0.72185"]}
          times={["14 Dec 2015", "14 Dec 23:00", "15 Dec 07:00", "15 Dec 15:00", "15 Dec 23:00", "16 Dec 07:00", "16 Dec 15:00"]}
          last={{ y: 253, text: "0.72742" }}
          order={{ y: 239, text: "#86289651 buy 1.00", textX: 56, textY: 232, width: 3 }}
          bottom={535}
          lines={[
            { color: "#128c12", width: 6, points: "39,480 62,471 82,443 124,395 166,358 207,332 248,310 269,300 311,299 332,295 352,295 373,305 404,305 414,301 456,297 477,290 539,290 560,299 601,300 643,311 675,316 705,330 726,337 777,337 788,332 809,331 850,311 892,296 912,291 933,282 954,274 974,274 1016,264 1057,262" },
          ]}
        />
      </ChartWindow>
      <ChartWindow title="USDJPY,H4">
        <Chart
          name="USDJPY H4 chart"
          x={25}
          header="USDJPY,H4"
          values="121.813 121.904 121.796 121.852"
          candles={usdjpy}
          pitch={20.75}
          bodyWidth={10}
          gridY={[156, 242, 327, 412, 451]}
          gridColor="#d6d6d6"
          prices={["122.985", "122.110", "121.210", "120.335"]}
          times={["4 Dec 2015", "7 Dec 20:00", "9 Dec 04:00", "10 Dec 12:00", "11 Dec 20:00", "15 Dec 04:00", "16 Dec 12:00"]}
          last={{ y: 265, text: "121.852" }}
          order={{ y: 265, text: "#86299404 buy 1.00", textX: 51, textY: 256, width: 6 }}
          priceLine={false}
          bottom={420}
          lines={[
            { color: "#1fb8ff", width: 6, points: "36,136 78,136 119,140 160,141 222,140 243,132 280,128 320,126 347,130 389,137 409,147 430,160 472,184 513,206 554,228 575,236 617,250 650,264 679,280 700,286 762,292 782,298 803,306 855,309 886,324 907,331 948,331 990,320 1010,311 1052,302" },
            { color: "#19e89b", width: 6, points: "36,160 78,160 119,163 160,163 222,162 243,156 280,152 320,150 347,152 389,160 409,170 430,183 472,210 513,232 554,253 575,261 617,270 650,282 679,302 700,309 762,316 782,322 803,330 855,334 886,347 907,354 948,354 990,343 1010,335 1052,325" },
            { color: "#ff4a3a", width: 4, dash: "9 6", points: "36,441 80,448 140,452 202,443 270,437 340,440 390,448 430,460 492,480 534,492 575,508 600,515 780,517 824,521 865,524 890,524 940,518 969,512 1000,498 1030,490 1052,484" },
          ]}
          extra={
            <>
              <text x="54" y="256" fill="#111">#86289414 buy 0.50</text>
              {macdBars.map((y, i) => (
                <path key={i} d={`M${409 + 20.7 * i} 451V${y}`} stroke="#c4c4c4" strokeWidth="3" />
              ))}
              <text x="884" y="124" fill="#111">Moving Average</text>
              <circle cx="1083" cy="116" r="13" fill="none" stroke="#444" strokeWidth="2.500" />
              <path d="M1076 123q7-8 14 0M1077 110l4 4M1089 110l-4 4" fill="none" stroke="#444" strokeWidth="2.500" />
              <path d="M34 424H1113" stroke="#fff" strokeWidth="4" />
              <path d="M34 429H1113V535H34z" fill="none" stroke="#333" strokeWidth="4" />
              <text x="46" y="458" fill="#111">MACD(12,26,9) -0.0039 -0.1813</text>
              <text x="1121" y="453" fill="#111">0.1209</text>
              <text x="1121" y="460" fill="#111">0.00</text>
              <text x="1121" y="525" fill="#111">-0.4807</text>
            </>
          }
        />
      </ChartWindow>
      <ChartWindow title="XAUUSD,H1">
        <Chart
          name="XAUUSD H1 chart"
          x={30}
          header="XAUUSD,H1"
          values="1073.86 1075.02 1072.83 1073.61"
          candles={xauusd}
          pitch={20.75}
          bodyWidth={10}
          gridY={gridFull}
          gridColor="#94a0ac"
          prices={["1075.70", "1072.30", "1068.90", "1065.40", "1062.00", "1058.60"]}
          times={["14 Dec 2015", "14 Dec 21:00", "15 Dec 06:00", "15 Dec 14:00", "15 Dec 22:00", "16 Dec 07:00", "16 Dec 15:00"]}
          last={{ y: 151, text: "1073.61" }}
          order={{ y: 289, text: "#85762147 buy 1.00", textX: 56, textY: 281, width: 3 }}
          bottom={535}
          lines={[
            { color: "#1a1aff", width: 6, points: "39,146 62,160 82,156 103,160 124,175 166,207 207,247 248,283 269,293 290,302 311,306 352,324 394,353 435,374 456,375 477,382 518,382 539,374 580,374 622,383 643,382 684,389 726,401 788,404 850,400 871,394 933,381 954,374 974,374 995,367 1016,358 1037,333 1057,317" },
            { color: "#ff1a1a", width: 6, points: "39,201 62,214 82,210 103,214 145,243 186,281 207,302 248,340 269,348 290,355 311,361 352,377 373,397 414,416 456,432 477,436 518,434 539,427 570,426 622,435 663,436 715,450 767,453 809,455 850,450 912,436 954,428 1016,410 1037,390 1057,370" },
          ]}
        />
      </ChartWindow>
    </div>
  );
}

function WorkspaceTabs() {
  return (
    <div className="mt-0.5 flex h-[17px] items-stretch border-t border-[#444] text-[10px] text-[#999]">
      <div role="tablist" className="flex flex-1 items-stretch pl-1">
        <button type="button" role="tab" aria-selected="true" className="border border-t-0 border-r-2 border-b-2 border-[#444] bg-white px-2 leading-3 text-[#222]">
          GBPUSD,H4
        </button>
        {["USDJPY,H4", "EURGBP,H1", "XAUUSD,H1"].map((t) => (
          <span key={t} className="flex items-center">
            <button type="button" role="tab" aria-selected="false" className="px-[9px]">{t}</button>
            <span className="h-3 w-px bg-[#999]" />
          </span>
        ))}
      </div>
      <div className="flex items-center gap-3 pr-1.5">
        <button type="button" aria-label="Scroll tabs left">
          <svg viewBox="0 0 3 5" className="h-[5px] w-[3px]" aria-hidden="true"><path d="M3 0v5L0 2.500z" fill="#999" /></svg>
        </button>
        <button type="button" aria-label="Scroll tabs right">
          <svg viewBox="0 0 3 5" className="h-[5px] w-[3px]" aria-hidden="true"><path d="M0 0v5l3-2.500z" fill="#999" /></svg>
        </button>
      </div>
    </div>
  );
}

/* ---------- application ---------- */

export default function App() {
  return (
    <main className="flex min-h-screen flex-col border-2 border-b-0 border-[#858585] bg-[#f0f0f0] font-['Open_Sans','Noto_Sans',sans-serif] text-[#222]">
      <header className="flex h-[25px] items-center bg-white pr-[17px] pl-2">
        <AppIcon />
        <h1 className="flex-1 pl-1 text-[10px]">7866484: MetaQuotes-Demo - Demo Account - GBPUSD,H4</h1>
        <div className="flex gap-[30px]">
          <button type="button" aria-label="Minimize">
            <svg viewBox="0 0 9 9" className="size-[9px]" aria-hidden="true"><path d="M0 4.500h9" stroke="#222" /></svg>
          </button>
          <button type="button" aria-label="Maximize">
            <svg viewBox="0 0 9 9" className="size-[9px]" aria-hidden="true"><path d="M.5.5h8v8h-8z" fill="none" stroke="#222" /></svg>
          </button>
          <button type="button" aria-label="Close">
            <svg viewBox="0 0 9 9" className="size-[9px]" aria-hidden="true"><path d="M.5.5l8 8M8.500.5l-8 8" stroke="#222" /></svg>
          </button>
        </div>
      </header>
      <nav className="flex h-[18px] items-center gap-[15px] pl-1.5 text-[10px]">
        {menus.map((m) => (
          <button key={m} type="button">{m}</button>
        ))}
      </nav>
      <Toolbar />
      <div className="flex flex-1">
        <aside className="flex w-[183px] shrink-0 flex-col gap-[5px] border-t border-[#bbb] pr-1 pb-1 pl-[3px]">
          <MarketWatch />
          <Navigator />
        </aside>
        <div className="flex min-w-0 flex-1 flex-col pr-1">
          <Workspace />
          <WorkspaceTabs />
        </div>
      </div>
      <footer className="flex h-[6px] flex-col justify-end pl-3">
        <div className="h-px bg-[#a5a5a5]" />
      </footer>
    </main>
  );
}
